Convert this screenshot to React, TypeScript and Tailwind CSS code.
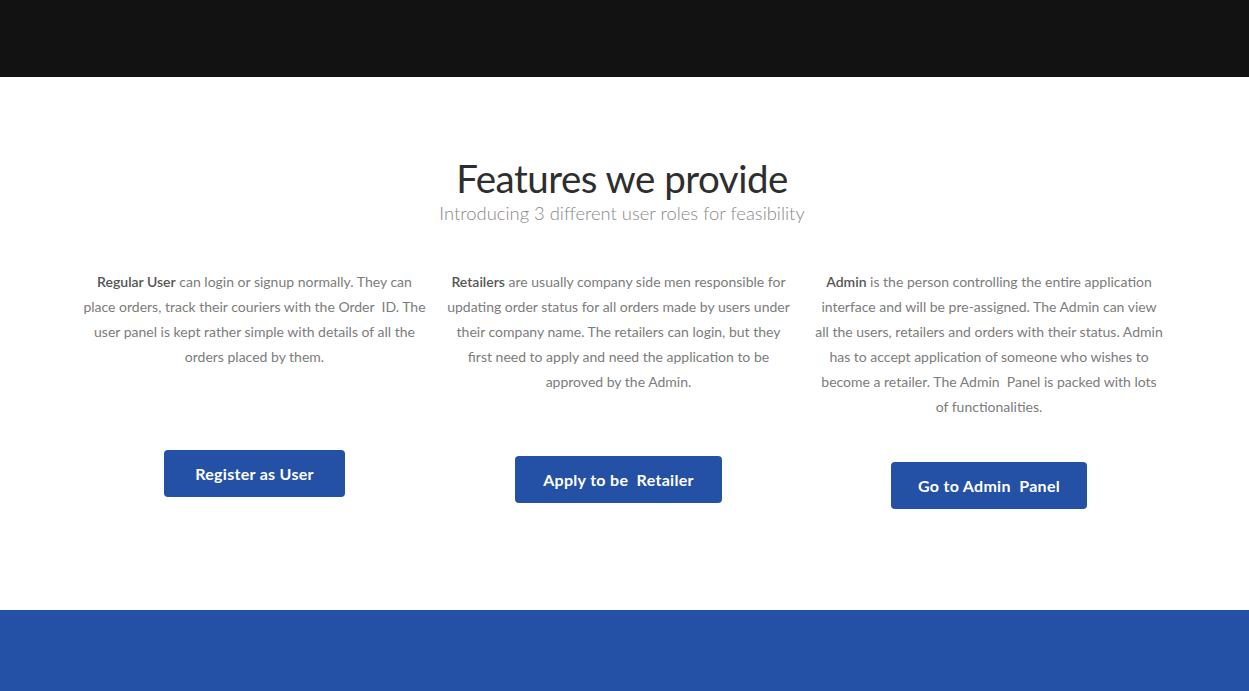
const font = { fontFamily: '"Lato", "Open Sans", sans-serif' }

type Feature = {
  name: string
  lines: string[]
  button: string
  gap: string
}

const features: Feature[] = [
  {
    name: 'Regular User',
    lines: [
      ' can login or signup normally. They can',
      'place orders, track their couriers with the Order  ID. The',
      'user panel is kept rather simple with details of all the',
      'orders placed by them.',
    ],
    button: 'Register as User',
    gap: 'mt-[81px] px-[31px]',
  },
  {
    name: 'Retailers',
    lines: [
      ' are usually company side men responsible for',
      'updating order status for all orders made by users under',
      'their company name. The retailers can login, but they',
      'first need to apply and need the application to be',
      'approved by the Admin.',
    ],
    button: 'Apply to be  Retailer',
    gap: 'mt-[62px] px-[28px]',
  },
  {
    name: 'Admin',
    lines: [
      ' is the person controlling the entire application',
      'interface and will be pre-assigned. The Admin can view',
      'all the users, retailers and orders with their status. Admin',
      'has to accept application of someone who wishes to',
      'become a retailer. The Admin  Panel is packed with lots',
      'of functionalities.',
    ],
    button: 'Go to Admin  Panel',
    gap: 'mt-[43px] px-[27px]',
  },
]

export default function App() {
  return (
    <div className="w-full min-h-screen bg-white" style={font}>
      <div className="h-[77px] bg-[#121212]" />

      <section className="h-[533px] bg-white pt-[77px]">
        <div className="pr-[5px]">
          <h2 className="text-center text-[38.5px] leading-[48px] text-[#2e2e2e] tracking-[-0.5px]">
            Features we provide
          </h2>
          <p className="text-center text-[18.4px] leading-[22px] text-[#888888] font-light">
            Introducing 3 different user roles for feasibility
          </p>
        </div>

        <div className="ml-[70px] mt-[45px] grid grid-cols-[369px_359px_382px]">
          {features.map((f) => (
            <div key={f.name} className="flex flex-col items-center">
              <p className="text-center text-[14px] leading-[25px] text-[#7c7c7c]">
                {f.lines.map((line, i) => (
                  <span key={i} className="block whitespace-pre">
                    {i === 0 && <span className="font-semibold text-[#555]">{f.name}</span>}
                    {line}
                  </span>
                ))}
              </p>
              <button
                className={`${f.gap} h-[47px] rounded-[4px] bg-[#2451a6] text-white text-[16px] font-bold whitespace-pre tracking-[0.3px] cursor-pointer`}
              >
                {f.button}
              </button>
            </div>
          ))}
        </div>
      </section>

      <div className="h-[81px] bg-[#2451a6]" />
    </div>
  )
}
